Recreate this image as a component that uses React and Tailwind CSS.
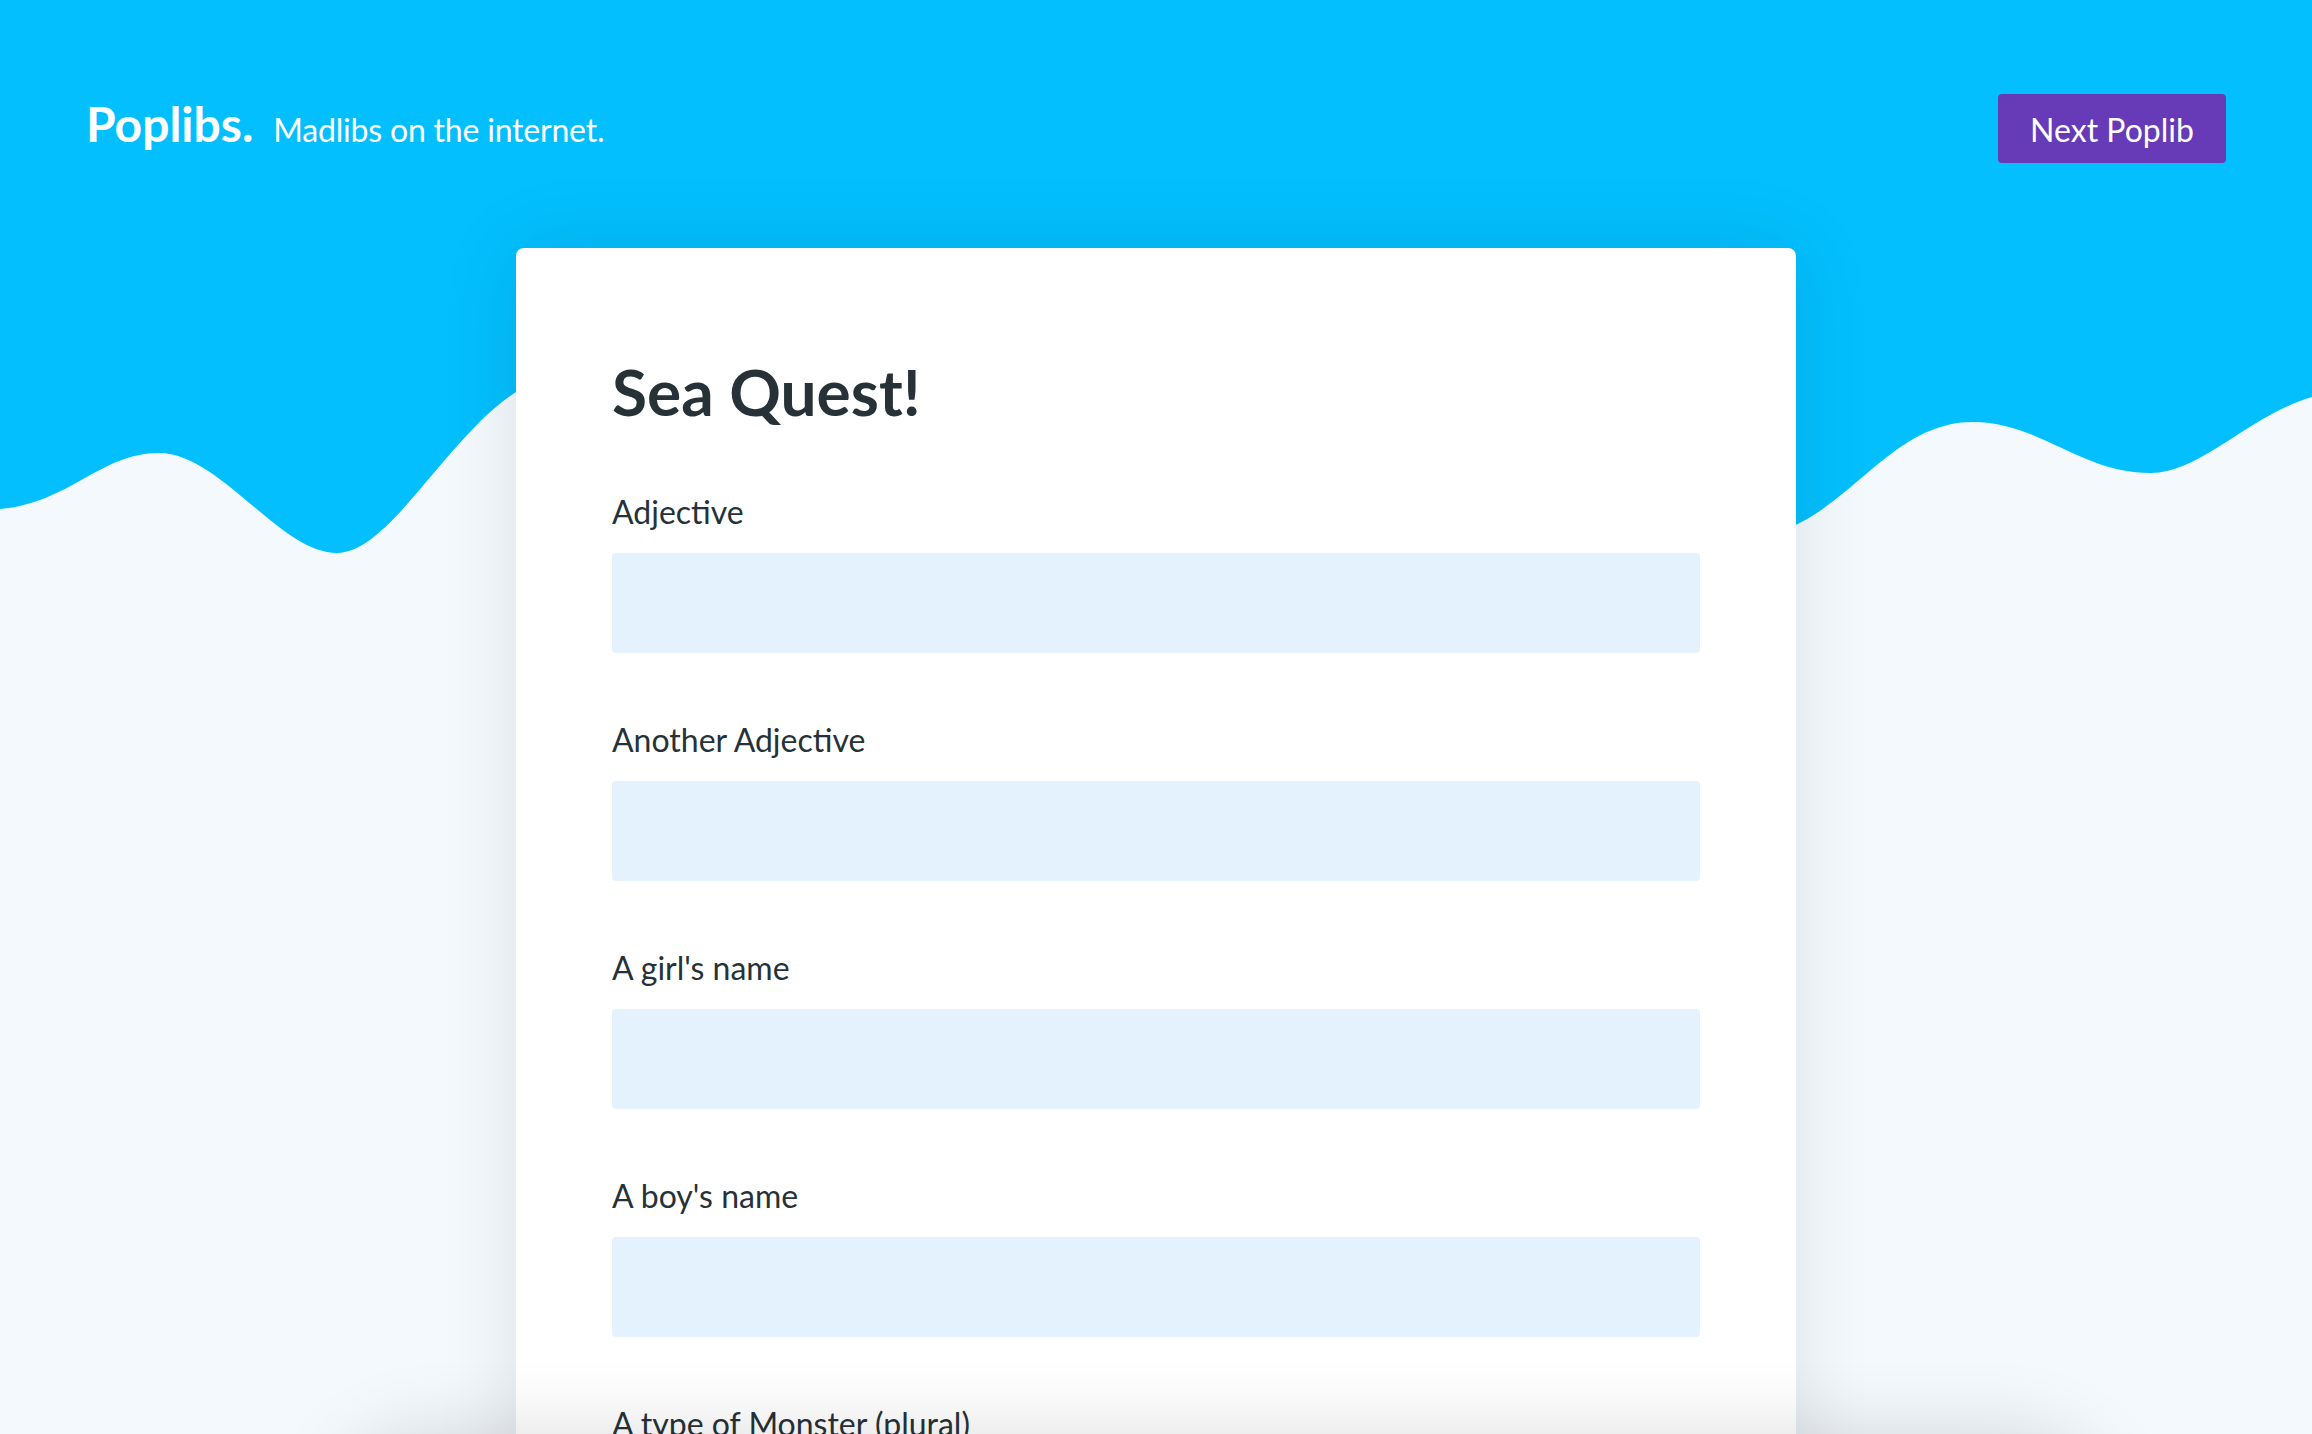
import React from "react";

const fields = [
  "Adjective",
  "Another Adjective",
  "A girl's name",
  "A boy's name",
  "A type of Monster (plural)",
  "A body part",
  "A verb ending in -ing",
  "A place",
];

const Wave = () => (
  <svg
    className="absolute top-0 left-0 w-full h-[600px]"
    viewBox="0 0 2312 600"
    preserveAspectRatio="none"
  >
    <path
      fill="#03BFFE"
      d="M0,0 L0,509 C70,503 100,453 159,453 C220,453 280,553 337,553 C400,553 470,385 560,375 L1740,538 C1840,538 1880,422 1973,422 C2040,422 2080,473 2151,473 C2200,473 2250,415 2312,397 L2312,0 Z"
    />
  </svg>
);

const Field = ({ label }) => (
  <div className="mb-[67px]">
    <label className="block text-[32px] leading-[40px] text-[#263238] mb-[21px]">{label}</label>
    <input type="text" className="block w-full h-[100px] rounded bg-[#E3F2FD] border-0 outline-none px-6 text-[32px] text-[#263238]" />
  </div>
);

export default function App() {
  return (
    <div className="relative min-h-screen bg-[#F4F9FE] font-['Lato',sans-serif] overflow-hidden">
      <Wave />

      {/* Header */}
      <header className="relative flex items-start justify-between px-[86px] pt-[94px]">
        <div className="flex items-baseline gap-5 mt-[6px] text-white">
          <span className="text-[48px] font-bold leading-none">Poplibs.</span>
          <span className="text-[32px] leading-none tracking-[-0.2px]">Madlibs on the internet.</span>
        </div>
        <button className="h-[69px] w-[228px] rounded bg-[#673AB7] pt-[2px] text-white text-[32px] leading-none">
          Next Poplib
        </button>
      </header>

      {/* Card */}
      <main className="relative mx-auto mt-[85px] w-[1280px] rounded-lg bg-white px-24 pt-[112px] pb-24 shadow-[0_0_80px_rgba(0,0,0,0.1)]">
        <h1 className="text-[64px] font-bold leading-none text-[#263238] mb-[68px]">Sea Quest!</h1>
        {fields.map((f) => (
          <Field key={f} label={f} />
        ))}
      </main>

      {/* shadow of bar below the fold */}
      <div className="fixed left-[330px] right-[200px] top-full h-[200px] rounded-full bg-white shadow-[0_0_80px_rgba(0,0,0,0.14)]"></div>
    </div>
  );
}
